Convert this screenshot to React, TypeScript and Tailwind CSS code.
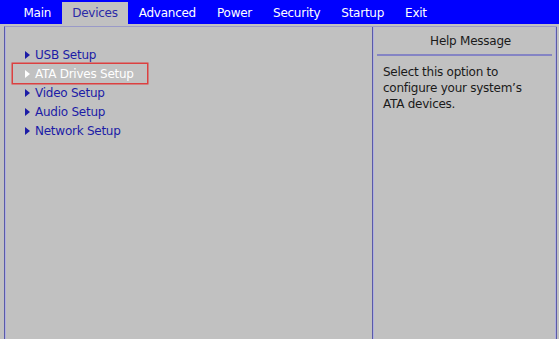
import React from 'react';

const tabs = ['Main', 'Devices', 'Advanced', 'Power', 'Security', 'Startup', 'Exit'];
const items = ['USB Setup', 'ATA Drives Setup', 'Video Setup', 'Audio Setup', 'Network Setup'];

const Arrow = ({ color }: { color: string }) => (
  <svg width="5" height="8" viewBox="0 0 5 8" className="shrink-0">
    <path d="M0 0 L5 4 L0 8 Z" fill={color} />
  </svg>
);

export default function App() {
  const active = 'Devices';
  const selected = 'ATA Drives Setup';

  return (
    <div
      className="w-[559px] h-[339px] overflow-hidden bg-[#c1c1c1] text-[12px] tracking-[-0.25px]"
      style={{ fontFamily: '"DejaVu Sans", Verdana, sans-serif' }}
    >
      {/* Top menu */}
      <div className="h-[24px] bg-[#0000ff] flex items-end pl-[13px]">
        {tabs.map((t) => (
          <div
            key={t}
            className={`h-[22px] px-[10.5px] flex items-center leading-none ${
              t === active ? 'bg-[#c1c1c1] text-[#2a2aa8]' : 'text-white'
            }`}
          >
            {t}
          </div>
        ))}
      </div>

      {/* Frame */}
      <div className="pt-[2px] pl-[4px] pr-[2px] h-[315px]">
        <div className="h-full flex border-t border-[#9a9ac8] border-l border-l-[#5a5aa8]">
          {/* Left column */}
          <div className="w-[367px] h-full border-l border-[#b0b0de] pt-[18px]">
            {items.map((it) => (
              <div
                key={it}
                className={`ml-[7px] w-[134px] h-[19px] pl-[12px] flex items-center gap-[5px] ${
                  it === selected ? 'ring-[1.5px] ring-[#dc4040] text-white' : 'text-[#1c1ca6]'
                }`}
              >
                <Arrow color={it === selected ? '#ffffff' : '#1c1ca6'} />
                <span className="leading-none">{it}</span>
              </div>
            ))}
          </div>

          {/* Divider */}
          <div className="w-[1px] h-full bg-[#5a5aa8]" />
          <div className="w-[1px] h-full bg-[#b0b0de]" />

          {/* Help panel */}
          <div className="w-[181px] h-full">
            <div className="h-[27px] flex items-center justify-center pl-[12px] text-[#1a1a1a]">
              Help Message
            </div>
            <div className="mx-[3px] h-[2px] bg-[#8484c4]" />
            <div className="mt-[8px] pl-[9px] leading-[16px] text-[#1a1a1a]">
              Select this option to
              <br />
              configure your system’s
              <br />
              ATA devices.
            </div>
          </div>

          {/* Right border */}
          <div className="w-[1px] h-full bg-[#b0b0de]" />
          <div className="w-[1px] h-full bg-[#5a5aa8]" />
        </div>
      </div>
    </div>
  );
}
